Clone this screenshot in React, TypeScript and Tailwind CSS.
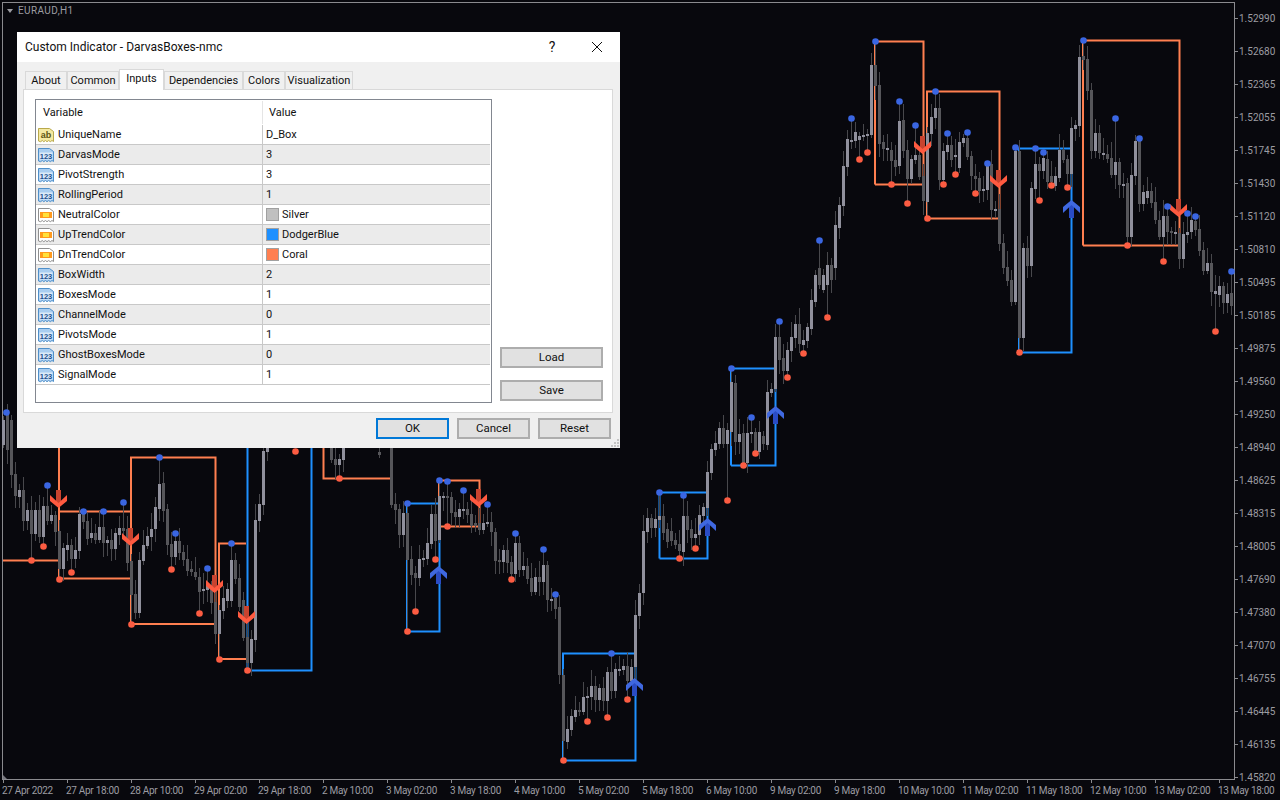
import React from "react";

const segs: [number, number[]][] = [
  [3, [420,445,1, 415,450,0, 420,475,0, 474,496,0, 490,497,1, 490,521,0, 510,521,1, 510,534,0, 510,534,1, 510,537,0, 506,537,1, 506,521,0, 515,521,1, 515,532,0, 531,569,0, 548,569,1, 545,550,1, 545,559,0, 550,559,1, 514,551,1, 514,522,0, 521,539,0, 533,538,1, 533,540,0, 527,540,1, 527,543,0, 540,543,1, 540,549,0, 533,549,1, 528,535,1, 528,531,0, 529,563,0, 561,595,0, 594,613,0, 560,613,1, 545,561,1, 536,546,1, 529,537,1, 507,529,1, 484,509,1, 483,511,0, 509,545,0, 544,557,0, 541,557,1, 541,553,0, 552,560,0, 559,571,0, 569,572,0, 572,577,0, 577,592,0, 589,591,1, 585,590,1, 585,603,0, 602,634,0, 610,634,1, 598,611,1, 589,601,1, 560,601,1, 560,579,0, 578,607,0, 600,638,0, 637,663,0, 639,663,1, 520,640,1, 504,521,1, 451,505,1, 440,452,1]],
  [331, [440,460,0, 459,465,0, 459,465,1, 440,460,1]],
  [379, [452,455,0]],
  [391, [440,505,0, 504,510,0, 509,535,0, 513,535,1, 513,560,0, 559,575,0, 573,578,0, 559,578,1, 558,560,1, 543,559,1, 514,544,1, 514,541,0, 496,540,1, 496,497,1, 496,498,0, 497,513,0, 512,517,0, 509,517,1, 509,510,1, 509,515,0, 514,526,0, 523,526,0, 523,530,0, 523,530,1, 522,524,1, 522,532,0, 532,561,0, 560,562,0, 550,562,1, 550,563,0, 562,574,0, 543,574,1, 543,570,0, 566,570,1, 566,579,0, 578,592,0, 577,592,1, 577,582,0, 565,582,1, 565,600,0, 599,600,1, 598,609,0, 607,675,0, 675,741,0, 729,742,1, 716,730,1, 710,717,1, 710,712,0, 697,712,1, 696,698,1, 686,697,1, 686,700,0, 688,700,1, 688,701,0, 672,701,1, 672,691,0, 669,691,1, 669,670,1, 666,670,1, 666,681,0, 667,681,1, 615,667,1, 593,616,1, 531,593,1, 518,532,1, 518,528,0, 519,528,1, 516,520,1, 516,533,0, 529,542,0, 531,541,0, 540,545,0, 544,551,0, 516,552,1, 516,530,0, 529,538,0, 534,538,1, 515,535,1, 507,516,1, 472,508,1, 449,473,1, 443,450,1, 428,444,1, 428,444,0, 430,444,1, 382,432,1, 383,442,0, 434,442,1, 433,463,0, 433,463,1, 432,434,1, 432,451,0, 432,452,1, 436,444,0, 392,445,1, 389,393,1, 337,389,1, 337,360,0, 358,371,0, 350,371,1, 337,351,1, 324,338,1, 324,344,0, 340,345,1, 327,341,1, 300,329,1, 275,302,1, 268,285,0, 275,290,1, 265,285,1, 265,280,0, 225,268,1, 205,228,1, 166,206,1, 139,167,1, 140,141,1, 132,141,1, 136,140,1, 135,136,1, 134,136,1, 65,135,1, 65,86,0, 85,144,0, 142,149,0, 148,150,1, 150,161,0, 160,167,0, 121,166,1, 120,151,0, 150,179,0, 159,179,1, 155,160,1, 155,177,0, 176,201,0, 133,202,1, 117,134,1, 108,118,1, 108,180,0, 151,180,1, 145,152,1, 145,160,0, 155,157,1, 142,168,1, 138,143,1, 138,157,0, 156,176,0, 176,179,0, 178,191,0, 189,191,1, 165,190,1, 164,210,0, 209,210,1, 209,244,0, 243,268,0, 267,281,0, 280,302,0, 151,302,1, 151,338,0, 248,338,1, 248,266,0, 188,266,1, 164,189,1, 164,171,0, 158,171,1, 159,182,0, 176,182,0, 176,186,1, 150,178,1, 150,160,0, 159,174,0, 128,174,1, 125,129,1, 57,126,1, 56,60,0, 59,91,0, 90,151,0, 133,151,1, 133,153,0, 153,155,1, 154,159,0, 158,175,0, 162,175,1, 162,185,0, 184,186,1, 183,237,0, 175,237,1, 141,176,1, 141,204,0, 192,204,1, 191,198,1, 191,203,0, 202,220,0, 220,237,0, 216,237,1, 216,232,0, 231,233,0, 232,234,1, 233,259,0, 234,259,1, 232,235,1, 220,232,1, 221,230,0, 229,251,0, 250,271,0, 263,271,1, 263,292,0, 291,294,1, 286,295,1, 286,303,0, 294,303,1, 293,306,0]],
];

const blue: [number, number][] = [[6,412],[47,485],[83,511],[103,511],[123,502],[159,457],[175,533],[207,568],[231,543],[407,503],[439,480],[447,481],[463,490],[487,504],[515,533],[543,549],[555,594],[611,653],[659,492],[683,495],[731,368],[751,417],[779,321],[819,240],[851,118],[875,41],[899,101],[915,125],[935,91],[947,133],[967,132],[987,163],[1015,147],[1035,148],[1043,152],[1083,40],[1115,118],[1139,138],[1167,206],[1187,213],[1195,216],[1231,271]];
const red: [number, number][] = [[43,546],[31,560],[59,579],[71,572],[131,624],[171,569],[199,613],[219,659],[247,670],[295,451],[339,478],[435,559],[415,611],[407,631],[447,526],[511,579],[587,721],[607,717],[627,699],[563,760],[679,558],[695,548],[727,500],[743,465],[755,453],[787,377],[803,353],[827,317],[859,159],[867,152],[891,184],[907,203],[927,218],[943,184],[955,174],[975,193],[1019,352],[1039,200],[1051,185],[1067,187],[1127,245],[1163,261],[1215,331]];

const coral = "#ff7f50";
const dodger = "#1e90ff";
const lines: [string, string][] = [
  [coral, "M3 560.5H59"],
  [coral, "M59 448V578.5H130"],
  [coral, "M59 511.5H130"],
  [coral, "M131 624V457.5H215.5V624H131"],
  [coral, "M219 659V543.5H246M219 659H246"],
  [dodger, "M247.5 448V670.5H311.5V448"],
  [coral, "M323.5 448V478.5H391"],
  [dodger, "M407 631.5V503.5H439.5V631.5H407"],
  [coral, "M439 526.5V480.5H479.5V526.5H439"],
  [dodger, "M563 760.5V653.5H635.5V760.5H563"],
  [dodger, "M659.5 558.5V492.5H707.5V558.5H659.5"],
  [dodger, "M731 465.5V368.5H775.5V465.5H731"],
  [coral, "M875 184.5V41.5H923.5V184.5H875"],
  [coral, "M927 218.5V91.5H999.5V218.5H927"],
  [dodger, "M1019 352.5V148.5H1071.5V352.5H1019"],
  [coral, "M1083 245.5V40.5H1179.5V245.5H1083"],
];

const downs: [number, number][] = [[58,508],[130,546],[214,593],[246,624],[478,507],[922,154],[998,188],[1178,217]];
const ups: [number, number][] = [[438,566],[634,678],[707,518],[775,406],[1071,200]];

function Chart() {
  const bTop = new Map<number, number>();
  const rBot = new Map<number, number>();
  blue.forEach(([x, y]) => bTop.set(x, y));
  red.forEach(([x, y]) => rBot.set(x, y));
  const candles: React.ReactNode[] = [];
  segs.forEach(([start, d]) => {
    for (let k = 0; k * 3 < d.length; k++) {
      const x = start + k * 4;
      const t = d[k * 3], b = d[k * 3 + 1], l = d[k * 3 + 2];
      const wt = bTop.get(x) ?? t - (4 + (k * 7) % 13);
      const wb = rBot.get(x) ?? b + (3 + (k * 11) % 12);
      candles.push(
        <g key={x}>
          <rect x={x} y={wt} width={1} height={wb - wt} fill="#48484c" />
          <rect x={x - 1} y={t} width={3} height={Math.max(b - t, 2)} fill={l ? "#90909c" : "#56565a"} />
        </g>
      );
    }
  });
  return (
    <svg className="absolute left-0 top-0" width={1280} height={800} viewBox="0 0 1280 800">
      <path d="M3 775L7 779H3Z" fill="#77777f" />
      {lines.map(([c, d], i) => (
        <path key={i} d={d} stroke={c} strokeWidth={2} fill="none" />
      ))}
      {candles}
      {downs.map(([x, y], i) => (
        <g key={i}>
          <rect x={x - 2} y={y - 18} width={5} height={14} fill="#c9432f" />
          <path d={`M${x + 0.5} ${y}L${x - 8} ${y - 7}V${y - 13}L${x + 0.5} ${y - 5}L${x + 9} ${y - 13}V${y - 7}Z`} fill="#ff5a40" />
        </g>
      ))}
      {ups.map(([x, y], i) => (
        <g key={i}>
          <rect x={x - 2} y={y + 4} width={5} height={14} fill="#2a4cc4" />
          <path d={`M${x + 0.5} ${y}L${x - 8} ${y + 7}V${y + 13}L${x + 0.5} ${y + 5}L${x + 9} ${y + 13}V${y + 7}Z`} fill="#3f68e0" />
        </g>
      ))}
      {blue.map(([x, y], i) => (
        <circle key={i} cx={x + 0.5} cy={y + 0.5} r={3.3} fill="#3a66e2" />
      ))}
      {red.map(([x, y], i) => (
        <circle key={i} cx={x + 0.5} cy={y + 0.5} r={3.3} fill="#fc5c42" />
      ))}
    </svg>
  );
}

const prices = ["1.52990","1.52680","1.52365","1.52055","1.51745","1.51430","1.51120","1.50810","1.50495","1.50185","1.49875","1.49560","1.49250","1.48940","1.48625","1.48315","1.48005","1.47690","1.47380","1.47070","1.46755","1.46445","1.46135","1.45820"];
const times = ["27 Apr 2022","27 Apr 18:00","28 Apr 10:00","29 Apr 02:00","29 Apr 18:00","2 May 10:00","3 May 02:00","3 May 18:00","4 May 10:00","5 May 02:00","5 May 18:00","6 May 10:00","9 May 02:00","9 May 18:00","10 May 10:00","11 May 02:00","11 May 18:00","12 May 10:00","13 May 02:00","13 May 18:00"];

const wave = "M0.5 1.5H11.5L15.5 4.5V14.5l-1.5-1-1.7 1.2-1.6-1.2-1.7 1.2-1.5-1.2-1.7 1.2-1.5-1.2-1.7 1.2L0.5 14Z";

function NumIcon() {
  return (
    <svg width="16" height="16" viewBox="0 0 16 16" className="shrink-0">
      <path d={wave} fill="#a9cdf0" stroke="#4f8fc9" />
      <rect x="1.5" y="5.5" width="13" height="7" fill="#dcebf9" />
      <text x="8" y="11.6" textAnchor="middle" fontSize="7.5" fontWeight="700" fontFamily="Liberation Sans, sans-serif" fill="#1c4f8c">123</text>
    </svg>
  );
}
function StrIcon() {
  return (
    <svg width="16" height="16" viewBox="0 0 16 16" className="shrink-0">
      <path d={wave} fill="#f4e9a2" stroke="#b9a94c" />
      <text x="8" y="11" textAnchor="middle" fontSize="9" fontWeight="700" fontFamily="Liberation Sans, sans-serif" fill="#5c5410">ab</text>
    </svg>
  );
}
function ColorIcon() {
  return (
    <svg width="16" height="16" viewBox="0 0 16 16" className="shrink-0">
      <path d={wave} fill="#ffffff" stroke="#8f8f8f" />
      <rect x="2" y="5" width="12" height="6" fill="#ff9a1e" />
      <rect x="5" y="6" width="6" height="4" fill="#ffe23c" />
    </svg>
  );
}

type Row = { n: string; v: string; i: "s" | "n" | "c"; c?: string };
const rows: Row[] = [
  { n: "UniqueName", v: "D_Box", i: "s" },
  { n: "DarvasMode", v: "3", i: "n" },
  { n: "PivotStrength", v: "3", i: "n" },
  { n: "RollingPeriod", v: "1", i: "n" },
  { n: "NeutralColor", v: "Silver", i: "c", c: "#c0c0c0" },
  { n: "UpTrendColor", v: "DodgerBlue", i: "c", c: "#1e90ff" },
  { n: "DnTrendColor", v: "Coral", i: "c", c: "#ff7f50" },
  { n: "BoxWidth", v: "2", i: "n" },
  { n: "BoxesMode", v: "1", i: "n" },
  { n: "ChannelMode", v: "0", i: "n" },
  { n: "PivotsMode", v: "1", i: "n" },
  { n: "GhostBoxesMode", v: "0", i: "n" },
  { n: "SignalMode", v: "1", i: "n" },
];
const tabs: [string, string][] = [["About", "w-[42px]"], ["Common", "w-[52px]"], ["Inputs", "w-[45px]"], ["Dependencies", "w-[79px]"], ["Colors", "w-[42px]"], ["Visualization", "w-[68px]"]];

const btn = "flex items-center justify-center h-[21px] bg-[#e1e1e1] border-2 border-[#adadad] text-[#111] text-[11.5px]";

function Dialog() {
  return (
    <div className="absolute left-[17px] top-[32px] w-[603px] h-[416px] bg-[#f0f0f0] flex flex-col font-['Roboto',sans-serif] text-[11px] text-[#111] leading-none">
      <div className="h-[30px] bg-white flex items-center pl-[8px] shrink-0 text-[12px]">
        <span className="flex-1">Custom Indicator - DarvasBoxes-nmc</span>
        <span className="text-[14px] w-[22px] mr-[28px] text-center">?</span>
        <svg width="12" height="12" viewBox="0 0 12 12" className="mr-[17px]">
          <path d="M1 1L11 11M11 1L1 11" stroke="#111" strokeWidth="1" fill="none" />
        </svg>
      </div>
      <div className="h-[27px] flex items-end pl-[8px] shrink-0">
        {tabs.map(([t, w]) =>
          t === "Inputs" ? (
            <div key={t} className={`${w} h-[21px] -mb-px relative bg-white border border-b-0 border-[#d9d9d9] flex items-center justify-center pb-[3px]`}>{t}</div>
          ) : (
            <div key={t} className={`${w} h-[18px] border border-b-0 border-[#d9d9d9] flex items-center justify-center`}>{t}</div>
          )
        )}
      </div>
      <div className="ml-[6px] w-[590px] h-[324px] shrink-0 border border-[#d9d9d9] bg-white flex pl-[11px] pt-[9px]">
        <div className="w-[457px] h-[304px] border border-[#828790] bg-white flex flex-col shrink-0">
          <div className="h-[25px] flex items-center shrink-0">
            <div className="w-[226px] pl-[7px]">Variable</div>
            <div className="h-[23px] border-l border-[#e5e5e5] pl-[6px] flex items-center">Value</div>
          </div>
          {rows.map((r, i) => (
            <div key={r.n} className={`w-[454px] h-[20px] flex items-center border-b border-[#c8c8c8] shrink-0 ${i % 2 ? "bg-[#ebebeb]" : "bg-white"}`}>
              <div className="w-[227px] h-full flex items-center pl-[2px] gap-[4px] border-r border-[#c8c8c8]">
                {r.i === "s" ? <StrIcon /> : r.i === "n" ? <NumIcon /> : <ColorIcon />}
                <span>{r.n}</span>
              </div>
              <div className="flex items-center pl-[3px] gap-[3px]">
                {r.c && <span className="w-[13px] h-[13px] border border-[#a0a0a0]" style={{ background: r.c }} />}
                <span>{r.v}</span>
              </div>
            </div>
          ))}
        </div>
        <div className="w-[103px] ml-[8px] flex flex-col pt-[248px] gap-[12px]">
          <div className={btn}>Load</div>
          <div className={btn}>Save</div>
        </div>
      </div>
      <div className="flex justify-end gap-[8px] pt-[5px] pr-[9px]">
        <div className={`${btn} w-[73px] !border-[#0078d7]`}>OK</div>
        <div className={`${btn} w-[73px]`}>Cancel</div>
        <div className={`${btn} w-[73px]`}>Reset</div>
      </div>
      <svg className="absolute right-[1px] bottom-[1px]" width="8" height="8" viewBox="0 0 8 8">
        <path d="M6 0h2v2H6zM3 3h2v2H3zM6 3h2v2H6zM0 6h2v2H0zM3 6h2v2H3zM6 6h2v2H6z" fill="#c4c4c4" />
      </svg>
    </div>
  );
}

export default function App() {
  return (
    <div className="relative w-[1280px] h-[800px] overflow-hidden bg-[#08080d] pt-[2px] pl-[2px] flex flex-col font-['Roboto',sans-serif] text-[10px] text-[#9c9ca2] leading-none">
      <div className="h-[778px] flex shrink-0">
        <div className="w-[1233px] border border-[#8a8a8e] flex items-start pl-[4px] pt-[2px] shrink-0">
          <span className="w-0 h-0 border-l-[3px] border-r-[3px] border-t-[4px] border-l-transparent border-r-transparent border-t-[#9c9ca2] mt-[4px] mr-[5px]" />
          <span className="pt-[1px] tracking-[0.4px]">EURAUD,H1</span>
        </div>
        <div className="flex flex-col -ml-px">
          {prices.map((p) => (
            <div key={p} className="h-[33px] flex items-center shrink-0">
              <span className="w-[4px] h-px bg-[#8a8a8e] mr-[1px]" />
              <span className="whitespace-nowrap">{p}</span>
            </div>
          ))}
        </div>
      </div>
      <div className="relative flex pl-px">
        {times.map((t) => (
          <div key={t} className="w-[64px] shrink-0 flex flex-col">
            <span className="w-px h-[3px] bg-[#8a8a8e]" />
            <span className="tracking-[-0.3px] whitespace-nowrap pt-[3px] -ml-[1px]">{t}</span>
          </div>
        ))}
      </div>
      <Chart />
      <Dialog />
    </div>
  );
}
